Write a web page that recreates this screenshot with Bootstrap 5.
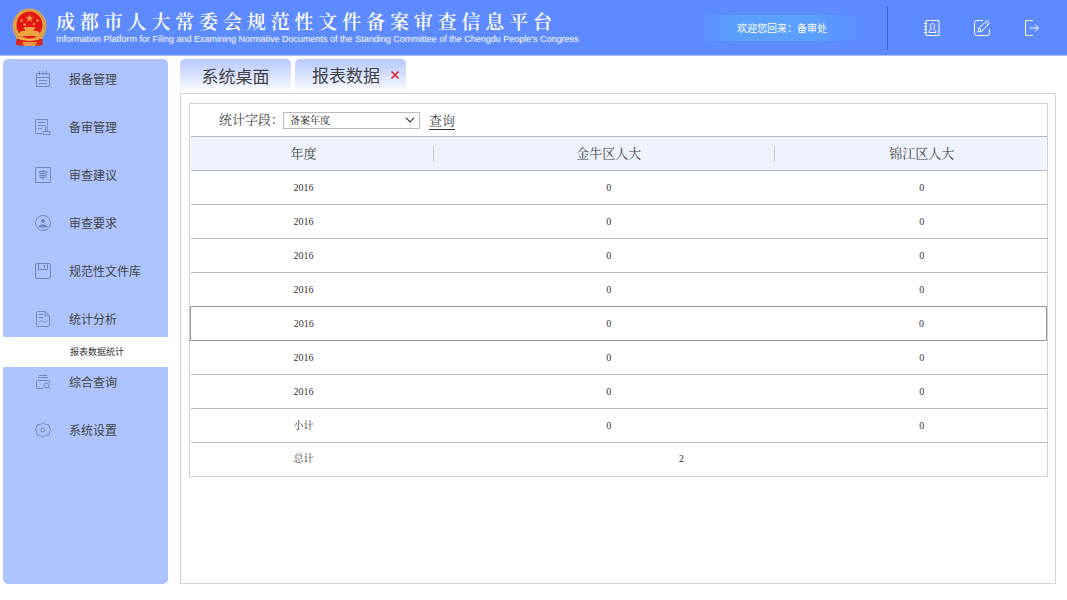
<!DOCTYPE html>
<html lang="zh-CN">
<head>
<meta charset="utf-8">
<meta name="viewport" content="width=device-width, initial-scale=1">
<title>成都市人大常委会规范性文件备案审查信息平台</title>
<link href="https://cdn.jsdelivr.net/npm/bootstrap@5.3.0/dist/css/bootstrap.min.css" rel="stylesheet">
<style>
  :root { --sans: "Noto Sans CJK SC", sans-serif; --song: "Liberation Serif", "Noto Serif CJK SC", "Noto Sans CJK SC", serif; }
  body { font-family: var(--sans); font-size: 12px; color: #444; background: #fff; }
  svg { fill: none; stroke: currentColor; flex: none; }
  svg.emblem { stroke: none; }
  .topbar { height: 56px; background: #5e8aff; border-bottom: 1px solid #a9c1ff; color: #fff; padding-left: 11px; padding-right: 26px; }
  .brand-title { font-family: "AR PL UKai CN", KaiTi, "Noto Serif CJK SC", "Noto Sans CJK SC", serif; font-size: 19px; line-height: 23px; font-weight: 600; text-align: justify; text-align-last: justify; padding-right: 13px; width: 509px; }
  .brand-sub { font-family: "Liberation Sans", Arial, sans-serif; font-size: 9px; line-height: 14px; }
  .welcome { width: 170px; height: 26px; font-size: 10px; margin-right: 20px;
    background: linear-gradient(90deg, transparent, #5b9fff 22%, #5b9fff 68%, transparent); }
  .tools { border-left: 1px solid #2c62d8; height: 44px; padding-left: 35px; gap: 32px; }
  .tools a { color: #fff; line-height: 0; }
  .page-body { padding: 3px 11px 16px 3px; gap: 12px; min-height: calc(100vh - 56px); }
  .side { width: 165px; background: #adc4ff; border-radius: 5px; padding-top: 5px; }
  .side-link { height: 30px; margin-bottom: 18px; padding-left: 32px; gap: 18px; color: #444; text-decoration: none; }
  .side-link svg { color: #7288c4; }
  .side-link.opened { margin-bottom: 3px; }
  .side-sub { height: 30px; background: #fff; color: #333; font-size: 9px; padding-left: 67px; text-decoration: none; }
  .tabs { gap: 4px; margin-bottom: 2px; }
  .tab-item { width: 111px; height: 32px; border-radius: 5px 5px 0 0; background: linear-gradient(#b6c8ff, #fbfcff); color: #444; font-size: 17px; line-height: 34px; }
  .tab-item a { color: inherit; text-decoration: none; }
  .tab-item button { border: 0; background: none; padding: 0; line-height: 0; color: #d81e1e; }
  .panel { border: 1px solid #d3d3d8; padding: 9px 7px 9px 8px; }
  .report { border: 1px solid #cfcfd4; font-family: var(--song); }
  .filter { height: 32px; padding-left: 29px; font-size: 13px; }
  .filter select { width: 137px; height: 17px; padding: 0 24px 0 6px; margin: 0 9px 0 -1px; font-size: 10px; line-height: 15px; border: 1px solid #bbb; border-radius: 0; color: #222; font-family: var(--song);
    background-position: right 4px center; background-size: 10px; }
  .filter button { border: 0; border-bottom: 1px solid #333; background: none; padding: 0; color: #444; line-height: 17px; margin-top: 2px; }
  .report table { width: 100%; table-layout: fixed; font-size: 10px; line-height: 14px; color: #333; text-align: center; }
  .report tr { height: 34px; border-top: 1px solid #bbb; }
  .report thead tr { background: #eff3ff; }
  .report thead th { font-size: 13px; font-weight: 400; color: #444; background: linear-gradient(#c5c8d3, #c5c8d3) no-repeat right center / 1px 16px; }
  .report thead th:last-child { background: none; }
  .report th, .report td { padding: 0; font-weight: 400; }
  .report tr > :first-child { padding-right: 18px; }
  .report tr > :nth-child(2) { padding-left: 8px; }
  .report tr > :nth-child(3) { padding-left: 22px; }
  .report tr.current { border: 1px solid #999; }
  .report tr.total { height: 33px; }
  .report tr.total > :nth-child(2) { padding: 0 118px 0 0; }
</style>
</head>
<body>
<header class="topbar d-flex align-items-center justify-content-between">
  <div class="d-flex align-items-center">
    <svg width="37" height="40" viewBox="0 0 37 40" class="emblem me-2" role="img" aria-label="国徽">
      <ellipse cx="18.500" cy="18" rx="17" ry="17.500" fill="#e3a94a"/>
      <ellipse cx="18.500" cy="18" rx="15.500" ry="16" fill="none" stroke="#c68445" stroke-dasharray="2 1"/>
      <path d="M6 28 Q18.500 34 31 28 L32 37 Q18.500 39 5 37Z" fill="#df2517"/>
      <ellipse cx="18.500" cy="17" rx="13" ry="13.500" fill="#e51612"/>
      <path d="M11 34h15l-2 4h-11z" fill="#e7964c"/>
      <path d="m18.500 6 1 3h3l-2.500 2 1 3-2.500-2-2.500 2 1-3-2.500-2h3zM10 11l2 1-1 2-2-1zM13 15l2 1-1 2-2-1zM22 15h2v2h-2zM26 11l2 1-1 2-2-1z" fill="#f29a48"/>
      <path d="M12 21l2-2h9l2 2zM14 21h9v2h-9zM8 26l2-3h17l2 3v2h-21z" fill="#efa642"/>
      <path d="M5 28q13.500 6 27 0v2q-13.500 6-27 0z" fill="#edb64a"/>
    </svg>
    <div>
      <h1 class="brand-title m-0">成都市人大常委会规范性文件备案审查信息平台</h1>
      <div class="brand-sub text-nowrap">Information Platform for Filing and Examining Normative Documents of the Standing Committee of the Chengdu People's Congress</div>
    </div>
  </div>
  <div class="d-flex align-items-center">
    <div class="welcome d-flex align-items-center justify-content-center">欢迎您回来：备审处</div>
    <nav class="tools d-flex align-items-center" aria-label="用户">
      <a href="#" aria-label="通讯录"><svg width="18" height="18" viewBox="0 0 18 18"><path d="M3 1.500h13v15H3zM1 4.500h3M1 7.500h3M1 10.500h3M1 13.500h3M6 13.500c0-3 2-3 2.500-3.500C7 8 7 4.500 9.500 4.500S12 8 10.500 10c.5.500 2.500.5 2.500 3.500z"/></svg></a>
      <a href="#" aria-label="编辑"><svg width="18" height="18" viewBox="0 0 18 18"><path d="M10 1.500H3.500a2 2 0 0 0-2 2v11a2 2 0 0 0 2 2h11a2 2 0 0 0 2-2V10M5 13l1-4 8-7.500 2.500 2.500L9 12zM12.500 3.500 15 6M6 9l3 3"/></svg></a>
      <a href="#" aria-label="退出"><svg width="18" height="18" viewBox="0 0 18 18"><path d="M10 1.500H2.500v15H10M7 9h8M12 5.500 15.500 9 12 12.500"/></svg></a>
    </nav>
  </div>
</header>

<div class="page-body d-flex align-items-stretch">
  <nav class="side flex-shrink-0" aria-label="主菜单">
    <a href="#" class="side-link d-flex align-items-center"><svg width="16" height="16" viewBox="0 0 16 16"><path d="M1.500 2.500h13v13h-13zM1.500 6.500h13M4.500 0v4M8 0v4M11.500 0v4M4 9.500h8M4 12.500h8"/></svg>报备管理</a>
    <a href="#" class="side-link d-flex align-items-center"><svg width="16" height="16" viewBox="0 0 16 16"><path d="M7 14.500H.5V.5h12V6M3 3.500h7M3 6.500h7M3 9.500h4M8 15.500v-3h7v3zM10 12.500l1-2.500c-1-1-1-3 .5-3s1.500 2 .5 3l1 2.500"/></svg>备审管理</a>
    <a href="#" class="side-link d-flex align-items-center"><svg width="16" height="16" viewBox="0 0 16 16"><path d="M.5.500h15v15H.500zM4 6V4.500h8V6M5 6.500h6v4H5zM5 8.500h6M8 3v10"/></svg>审查建议</a>
    <a href="#" class="side-link d-flex align-items-center"><svg width="16" height="16" viewBox="0 0 16 16"><circle cx="8" cy="8" r="7.500"/><path d="M4 12c0-3 8-3 8 0z" fill="currentColor"/><circle cx="8" cy="6" r="1.500" fill="currentColor"/></svg>审查要求</a>
    <a href="#" class="side-link d-flex align-items-center"><svg width="16" height="16" viewBox="0 0 16 16"><path d="M2 .5h12q1.500 0 1.500 1.500v12q0 1.500-1.500 1.500H2Q.5 15.500.5 14V2Q.5.5 2 .5zM3.500.5v6h9v-6M9.500 2v3"/></svg>规范性文件库</a>
    <a href="#" class="side-link opened d-flex align-items-center"><svg width="16" height="16" viewBox="0 0 16 16"><path d="M10 .5H2.500a1 1 0 0 0-1 1v13a1 1 0 0 0 1 1h11a1 1 0 0 0 1-1V5zM10 .5V5h4.500M4 3.500h4M4 6.500h4M4 11.500l2.500-2 3 2 3-2"/></svg>统计分析</a>
    <a href="#" class="side-sub d-flex align-items-center" aria-current="page">报表数据统计</a>
    <a href="#" class="side-link d-flex align-items-center"><svg width="16" height="16" viewBox="0 0 16 16"><path d="M4 1.500h8M3 3.500h10M8 14.500H2.500a1 1 0 0 1-1-1v-6a1 1 0 0 1 1-1h11a1 1 0 0 1 1 1V9M13 13l2 2"/><circle cx="11.500" cy="11.500" r="2.500"/></svg>综合查询</a>
    <a href="#" class="side-link d-flex align-items-center"><svg width="16" height="16" viewBox="0 0 16 16"><path d="M8 .5 10.500 2.500l3.500.5.500 3L15.500 8l-1 2-.5 3-3.500.5L8 15.500l-2.500-2L2 13l-.5-3-1-2 1-2L2 3l3.500-.5z"/><circle cx="8" cy="8" r="2"/></svg>系统设置</a>
  </nav>

  <main class="flex-grow-1 d-flex flex-column">
    <div class="tabs d-flex">
      <div class="tab-item text-center"><a href="#">系统桌面</a></div>
      <div class="tab-item d-flex align-items-center justify-content-end gap-2 pe-1"><a href="#">报表数据</a>
        <button type="button" aria-label="关闭"><svg width="14" height="14" viewBox="0 0 14 14"><path d="m3.500 3.500 7 7m0-7-7 7" stroke-width="1.500"/></svg></button></div>
    </div>
    <section class="panel flex-grow-1">
      <div class="report">
        <form class="filter d-flex align-items-center">
          <label for="field">统计字段：</label>
          <select id="field" class="form-select"><option>备案年度</option></select>
          <button type="button">查询</button>
        </form>
        <table>
          <colgroup><col style="width:28.500%"><col style="width:39.800%"><col></colgroup>
          <thead><tr><th scope="col">年度</th><th scope="col">金牛区人大</th><th scope="col">锦江区人大</th></tr></thead>
          <tbody>
            <tr><td>2016</td><td>0</td><td>0</td></tr>
            <tr><td>2016</td><td>0</td><td>0</td></tr>
            <tr><td>2016</td><td>0</td><td>0</td></tr>
            <tr><td>2016</td><td>0</td><td>0</td></tr>
            <tr class="current"><td>2016</td><td>0</td><td>0</td></tr>
            <tr><td>2016</td><td>0</td><td>0</td></tr>
            <tr><td>2016</td><td>0</td><td>0</td></tr>
            <tr><td>小计</td><td>0</td><td>0</td></tr>
            <tr class="total"><td>总计</td><td colspan="2">2</td></tr>
          </tbody>
        </table>
      </div>
    </section>
  </main>
</div>
<script src="https://cdn.jsdelivr.net/npm/bootstrap@5.3.0/dist/js/bootstrap.bundle.min.js"></script>
</body>
</html>
